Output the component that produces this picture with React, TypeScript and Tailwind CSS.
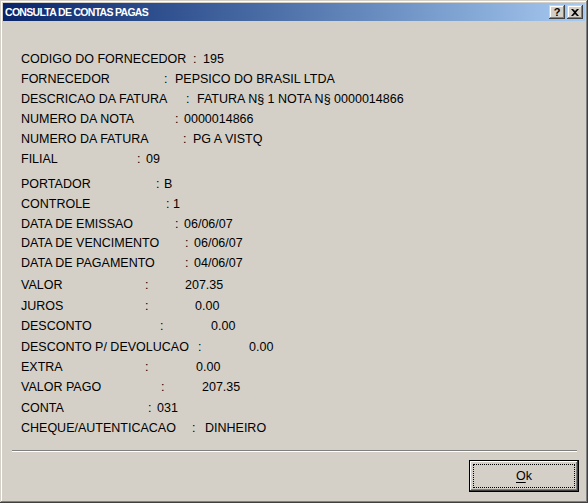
import React from 'react'

type Row = { label: string; value: string; w: string; cw: string; mt?: string }

const rows: Row[] = [
  { label: 'CODIGO DO FORNECEDOR', value: '195', w: 'w-[172px]', cw: 'w-[10px]' },
  { label: 'FORNECEDOR', value: 'PEPSICO DO BRASIL LTDA', w: 'w-[143px]', cw: 'w-[11px]' },
  { label: 'DESCRICAO DA FATURA', value: 'FATURA N§ 1 NOTA N§ 0000014866', w: 'w-[165px]', cw: 'w-[11px]' },
  { label: 'NUMERO DA NOTA', value: '0000014866', w: 'w-[154px]', cw: 'w-[9px]' },
  { label: 'NUMERO DA FATURA', value: 'PG A VISTQ', w: 'w-[162px]', cw: 'w-[10px]' },
  { label: 'FILIAL', value: '09', w: 'w-[116px]', cw: 'w-[9px]' },
  { label: 'PORTADOR', value: 'B', w: 'w-[135px]', cw: 'w-[8px]', mt: 'mt-[5px]' },
  { label: 'CONTROLE', value: '1', w: 'w-[145px]', cw: 'w-[7px]' },
  { label: 'DATA DE EMISSAO', value: '06/06/07', w: 'w-[154px]', cw: 'w-[9px]' },
  { label: 'DATA DE VENCIMENTO', value: '06/06/07', w: 'w-[164px]', cw: 'w-[9px]', mt: 'mt-[-1.5px]' },
  { label: 'DATA DE PAGAMENTO', value: '04/06/07', w: 'w-[164px]', cw: 'w-[9px]' },
  { label: 'VALOR', value: '207.35', w: 'w-[124px]', cw: 'w-[40px]', mt: 'mt-[2px]' },
  { label: 'JUROS', value: '0.00', w: 'w-[124px]', cw: 'w-[50px]', mt: 'mt-[1px]' },
  { label: 'DESCONTO', value: '0.00', w: 'w-[139px]', cw: 'w-[51px]' },
  { label: 'DESCONTO P/ DEVOLUCAO', value: '0.00', w: 'w-[177px]', cw: 'w-[51px]', mt: 'mt-[1px]' },
  { label: 'EXTRA', value: '0.00', w: 'w-[124px]', cw: 'w-[51px]' },
  { label: 'VALOR PAGO', value: '207.35', w: 'w-[140px]', cw: 'w-[41px]' },
  { label: 'CONTA', value: '031', w: 'w-[127px]', cw: 'w-[9px]', mt: 'mt-[1px]' },
  { label: 'CHEQUE/AUTENTICACAO', value: 'DINHEIRO', w: 'w-[171px]', cw: 'w-[13px]', mt: 'mt-[0.5px]' },
]

const bevel =
  'shadow-[inset_-1px_-1px_#404040,inset_1px_1px_#d4d0c8,inset_-2px_-2px_#808080,inset_2px_2px_#ffffff]'

function CaptionButton({ children }: { children: React.ReactNode }) {
  return (
    <div
      className={`w-[16px] h-[14px] bg-[#d4d0c8] flex items-center justify-center text-black font-bold text-[11px] leading-none ${bevel}`}
    >
      {children}
    </div>
  )
}

export default function App() {
  return (
    <div
      className={`w-[588px] h-[503px] bg-[#d4d0c8] p-[3px] flex flex-col text-black ${bevel}`}
      style={{ fontFamily: '"Liberation Sans", Arial, sans-serif' }}
    >
      {/* Title bar */}
      <div className="h-[18px] flex items-center justify-between pl-[2px] pr-[2px] bg-gradient-to-r from-[#0a246a] to-[#a6caf0] flex-shrink-0">
        <span className="text-white font-bold text-[10.5px] tracking-[-0.7px] leading-none">
          CONSULTA DE CONTAS PAGAS
        </span>
        <div className="flex gap-[2px]">
          <CaptionButton>?</CaptionButton>
          <CaptionButton>
            <svg width="8" height="7" viewBox="0 0 8 7">
              <path d="M0 0h2l2 2 2-2h2L5 3.5 8 7H6L4 5 2 7H0l3-3.5z" fill="#000" />
            </svg>
          </CaptionButton>
        </div>
      </div>

      {/* Fields */}
      <div className="flex flex-col pl-[18px] pt-[28.5px] text-[12.5px]">
        {rows.map((r) => (
          <div key={r.label} className={`h-[20px] flex items-center whitespace-nowrap ${r.mt ?? ''}`}>
            <span className={`${r.w} flex-shrink-0`}>{r.label}</span>
            <span className={`${r.cw} flex-shrink-0`}>:</span>
            <span>{r.value}</span>
          </div>
        ))}
      </div>

      {/* Separator */}
      <div className="mt-[11.5px] ml-[9px] mr-[8px] h-[2px] border-t border-[#808080] border-b border-b-white" />

      {/* Buttons */}
      <div className="flex justify-end mt-[8px] mr-[6px]">
        <div className="w-[110px] h-[32px] border border-black bg-[#d4d0c8] shadow-[inset_-1px_-1px_#404040,inset_1px_1px_#ffffff,inset_-2px_-2px_#808080] p-[3px]">
          <div className="w-full h-full border border-dotted border-black flex items-center justify-center text-[12.5px]">
            <span>
              <span className="underline underline-offset-2">O</span>k
            </span>
          </div>
        </div>
      </div>
    </div>
  )
}
